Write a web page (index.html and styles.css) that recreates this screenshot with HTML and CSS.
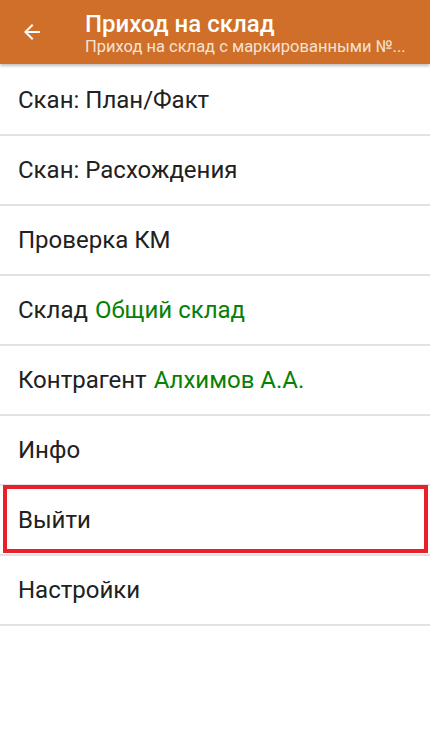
FILE: index.html
```html
<!DOCTYPE html>
<html lang="ru">
<head>
  <meta charset="UTF-8" />
  <title>Приход на склад</title>
  <link rel="stylesheet" href="styles.css">
</head>
<body>
  <header class="toolbar">
    <svg class="back" width="24" height="24" viewBox="0 0 24 24">
      <path d="M20 11H7.83l5.59-5.59L12 4l-8 8 8 8 1.41-1.41L7.83 13H20v-2z" fill="#fff"/>
    </svg>
    <div class="titles">
      <div class="title">Приход на склад</div>
      <div class="subtitle">Приход на склад с маркированными №...</div>
    </div>
  </header>

  <ul class="menu">
    <li>Скан: План/Факт</li>
    <li>Скан: Расхождения</li>
    <li>Проверка КМ</li>
    <li>Склад <span class="val">Общий склад</span></li>
    <li>Контрагент <span class="val">Алхимов А.А.</span></li>
    <li>Инфо</li>
    <li class="marked">Выйти</li>
    <li>Настройки</li>
  </ul>
</body>
</html>
```

FILE: styles.css
```css
body { margin: 0; background: #fff; font-family: Roboto, "Noto Sans", sans-serif; color: #212121; }
.toolbar { height: 64px; background: #cf6f29; display: flex; align-items: center; box-shadow: 0 2px 3px rgba(0,0,0,0.25); position: relative; z-index: 1; }
.back { margin-left: 20px; margin-right: 41px; flex: none; }
.titles { padding-top: 2px; }
.title { color: #fff; font-size: 24px; font-weight: 500; line-height: 28px; }
.subtitle { color: #f6e2d4; font-size: 16.5px; line-height: 20px; margin-top: -1px; white-space: nowrap; }
.menu { list-style: none; margin: 2px 0 0; padding: 0; }
.menu li { height: 68px; border-bottom: 2px solid #e2e2e2; display: flex; align-items: center; padding-left: 18px; font-size: 24px; position: relative; }
.menu .val { color: #078007; margin-left: 7px; }
.menu .marked::after { content: ""; position: absolute; left: 3px; right: 2px; top: -1px; bottom: 1px; border: 4px solid #e8202a; }
```
